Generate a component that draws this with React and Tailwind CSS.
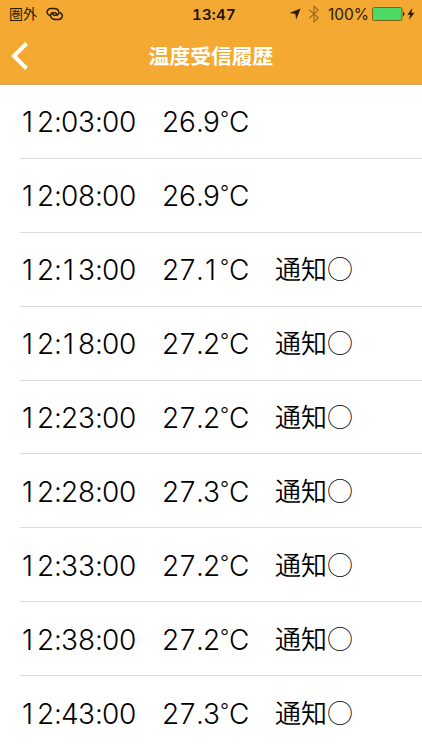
import React from 'react';

const records = [
    { time: '12:03:00', temp: '26.9', notified: false },
    { time: '12:08:00', temp: '26.9', notified: false },
    { time: '12:13:00', temp: '27.1', notified: true },
    { time: '12:18:00', temp: '27.2', notified: true },
    { time: '12:23:00', temp: '27.2', notified: true },
    { time: '12:28:00', temp: '27.3', notified: true },
    { time: '12:33:00', temp: '27.2', notified: true },
    { time: '12:38:00', temp: '27.2', notified: true },
    { time: '12:43:00', temp: '27.3', notified: true },
];

const StatusBar = () => {
    return (
        <div className="grid h-7 grid-cols-[1fr_auto_1fr] items-center pl-[9px] pr-[7px] text-[#2b1b04]">
            <div className="flex items-center gap-[9px]">
                <span className="pb-[2px] font-['Noto_Sans_CJK_JP',sans-serif] text-[14px] leading-none">圏外</span>
                <svg width="18" height="14" viewBox="0 0 18 14" fill="none" stroke="currentColor" strokeWidth="1.4" strokeLinecap="round">
                    <path d="M3.200 8.300C-.3 6.300.8 1.700 4.800 1.500h3.400c4.800 0 6.200 5 3 6.400-2.400 1-5 .1-5-2.200" />
                    <path d="M14.200 5.700c3.500 2 2.400 6.600-1.600 6.800H9.200c-4.800 0-6.200-5-3-6.400 2.400-1 5-.1 5 2.200" />
                </svg>
            </div>

            <span className="ml-[4px] pt-[1px] font-['Inter',sans-serif] text-[15px] font-semibold leading-none tracking-[0.2px] tabular-nums text-[#1c1002]">13:47</span>

            <div className="flex items-center justify-end">
                <svg className="mr-[7px]" width="12" height="12" viewBox="0 0 12 12" fill="currentColor">
                    <path d="M11.600.4 7.200 11.600 6.300 5.800.4 5z" />
                </svg>
                <svg className="mr-[8px] text-[#a56c1a]" width="12" height="18" viewBox="0 0 12 18" fill="none" stroke="currentColor" strokeWidth="1.200">
                    <path d="M1.200 4.800 10.300 12.800 6 16.800V1.200l4.300 4L1.200 13.200" />
                </svg>
                <span className="mr-[3px] pt-[1px] font-['Inter',sans-serif] text-[15.500px] leading-none">100%</span>
                <svg width="33" height="14" viewBox="0 0 33 14">
                    <rect x=".5" y=".5" width="29.500" height="13" rx="1.800" fill="#4cd964" stroke="#806013" />
                    <path d="M31 4.800c2 .8 2 3.600 0 4.400z" fill="currentColor" />
                </svg>
                <svg className="ml-[2px]" width="8" height="12" viewBox="0 0 8 12" fill="currentColor">
                    <path d="M5.300 0 .4 6.800h2.900L1.800 12l5.800-7.300H4.500z" />
                </svg>
            </div>
        </div>
    );
};

const Header = () => {
    return (
        <header className="h-[85px] border-b border-[#d1a66b] bg-[#f4a933]">
            <StatusBar />
            <div className="grid h-14 grid-cols-[1fr_auto_1fr] items-center">
                <button className="ml-[10px] w-fit" aria-label="戻る">
                    <svg width="18" height="28" viewBox="0 0 18 28" fill="none" stroke="white" strokeWidth="4">
                        <path d="M16.500 1.500 4 14l12.500 12.500" />
                    </svg>
                </button>
                <h1 className="pb-[2px] font-['Noto_Sans_CJK_JP',sans-serif] text-[20.800px] font-bold leading-none text-white">温度受信履歴</h1>
            </div>
        </header>
    );
};

// Every digit gets the same cell, punctuation a narrow one. The 1 sits left in its cell.
const cellClass = (char) => {
    if (char === '1') return 'w-[17px] pr-[2px] text-center';
    if (/\d/.test(char)) return 'w-[17px] text-center';
    return 'w-[7px] text-center';
};

const Digits = ({ value }) => {
    return value.split('').map((char, i) => (
        <span key={i} className={cellClass(char)}>{char}</span>
    ));
};

const RecordRow = ({ record }) => {
    return (
        <li className="ml-5 flex h-[73.900px] items-center border-b border-[#dcdbdf] text-black last:border-b-0">
            <span className="flex w-[142px] pt-[2px] font-['Inter',sans-serif] text-[28px] font-light leading-none">
                <Digits value={record.time} />
            </span>
            <span className="flex w-[113px] pt-[2px] font-['Inter',sans-serif] text-[28px] font-light leading-none">
                <Digits value={record.temp} />
                <span className="w-[9px] pt-[1px] text-center text-[20px] leading-none">°</span>
                <span>C</span>
            </span>
            {record.notified && (
                <span className="pb-[2px] font-['Noto_Sans_CJK_JP',sans-serif] text-[26px] font-[350] leading-none">
                    通知<span className="font-thin">○</span>
                </span>
            )}
        </li>
    );
};

const App = () => {
    return (
        <div className="h-[750px] w-[422px] overflow-hidden bg-white">
            <Header />
            <ul>
                {records.map((record) => (
                    <RecordRow key={record.time} record={record} />
                ))}
            </ul>
        </div>
    );
};

export default App;
